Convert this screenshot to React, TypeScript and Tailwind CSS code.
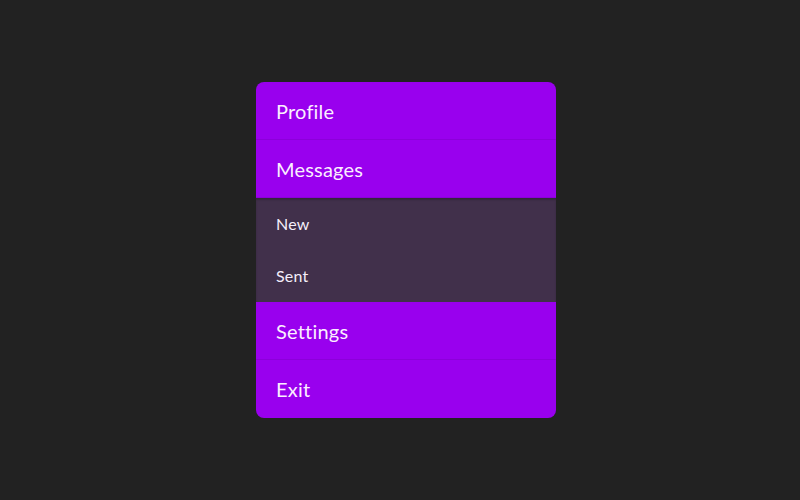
import { useState } from 'react';

const ITEMS = [
  { label: 'Profile' },
  { label: 'Messages', children: ['New', 'Sent'] },
  { label: 'Settings' },
  { label: 'Exit' },
];

export default function App() {
  const [open, setOpen] = useState<string | null>('Messages');

  return (
    <div
      className="w-full h-screen bg-[#222222] flex items-center justify-center"
      style={{ fontFamily: 'Lato, "Open Sans", sans-serif' }}
    >
      <div className="w-[300px] ml-3 rounded-lg overflow-hidden bg-[#9900ee]">
        {ITEMS.map(({ label, children }, i) => (
          <div key={label}>
            <button
              onClick={() => setOpen(open === label ? null : label)}
              className={`w-full h-[58px] flex items-center pl-5 text-[20px] tracking-[0.2px] text-[#fbeeff] text-left ${
                i < ITEMS.length - 1 ? 'border-b border-[#8c00da]' : ''
              }`}
            >
              {label}
            </button>
            {children && open === label && (
              <div className="bg-[#41304b] shadow-[inset_0_2px_2px_rgba(0,0,0,0.2)]">
                {children.map((c) => (
                  <div key={c} className="h-[52px] flex items-center pl-5 text-[16px] tracking-[0.2px] text-[#f4eefa]">
                    {c}
                  </div>
                ))}
              </div>
            )}
          </div>
        ))}
      </div>
    </div>
  );
}
